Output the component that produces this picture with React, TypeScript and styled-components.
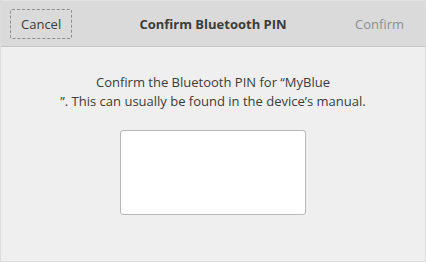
import React from "react";
import styled, { createGlobalStyle } from "styled-components";

const Global = createGlobalStyle`
  html, body { margin: 0; padding: 0; }
  body { width: 426px; height: 262px; overflow: hidden; background: #f0f0f0; }
`;

const Window = styled.div`
  width: 426px;
  height: 262px;
  box-sizing: border-box;
  display: flex;
  flex-direction: column;
  background: #efefef;
  border: 1px solid #dcdcdc;
  border-top: none;
  font-family: "Open Sans", "DejaVu Sans", sans-serif;
  color: #3c3c3c;
`;

const Header = styled.div`
  height: 47px;
  box-sizing: border-box;
  display: grid;
  grid-template-columns: 1fr auto 1fr;
  align-items: center;
  padding: 0 9px;
  background: #dadada;
  border-top: 1px solid #e4e4e4;
  border-bottom: 1px solid #c4c4c4;
`;

const Button = styled.button<{ $disabled?: boolean; $focused?: boolean; $align: "start" | "end" }>`
  justify-self: ${(p) => p.$align};
  height: 30px;
  padding: 0 ${(p) => (p.$focused ? "10px" : "11px")};
  background: transparent;
  border: 1px ${(p) => (p.$focused ? "dashed #8e8e8e" : "solid transparent")};
  border-radius: 2px;
  font-family: inherit;
  font-size: 13px;
  color: ${(p) => (p.$disabled ? "#8d9091" : "#3c3c3c")};
`;

const Title = styled.div`
  font-weight: 700;
  font-size: 13px;
  color: #3c3c3c;
`;

const Body = styled.div`
  flex: 1;
  display: flex;
  flex-direction: column;
  align-items: center;
  padding-top: 26px;
`;

const Message = styled.p`
  margin: 0;
  font-size: 13px;
  line-height: 19px;
  text-align: center;
  color: #3c3c3c;
`;

const Entry = styled.input`
  margin-top: 19px;
  width: 186px;
  height: 85px;
  box-sizing: border-box;
  background: #ffffff;
  border: 1px solid #b8b8b8;
  border-radius: 3px;
  outline: none;
`;

export default function App() {
  return (
    <>
      <Global />
      <Window>
        <Header>
          <Button $align="start" $focused>Cancel</Button>
          <Title>Confirm Bluetooth PIN</Title>
          <Button $align="end" $disabled>Confirm</Button>
        </Header>
        <Body>
          <Message>
            Confirm the Bluetooth PIN for “MyBlue
            <br />
            ”. This can usually be found in the device’s manual.
          </Message>
          <Entry type="text" />
        </Body>
      </Window>
    </>
  );
}
